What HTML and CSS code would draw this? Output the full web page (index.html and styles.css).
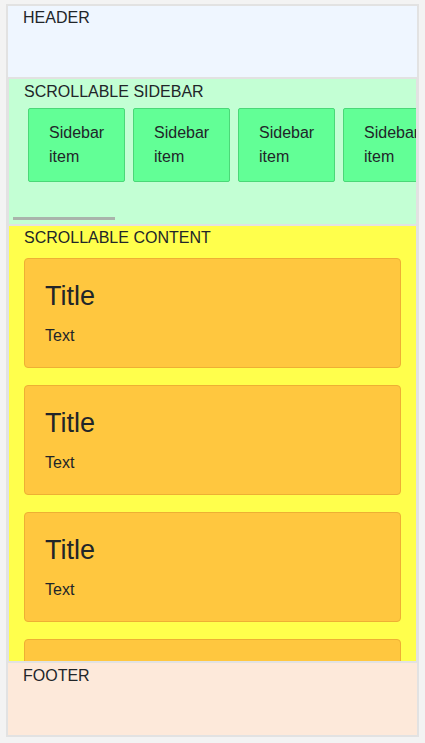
FILE: index.html
```html
<!DOCTYPE html>
<html lang="en">
<head>
<meta charset="utf-8">
<title>Layout</title>
<link rel="stylesheet" href="styles.css">
</head>
<body>
<div class="app">
  <header class="header">HEADER</header>
  <aside class="sidebar">
    <div class="section-title">SCROLLABLE SIDEBAR</div>
    <div class="sidebar-row">
      <div class="sidebar-item">Sidebar item</div>
      <div class="sidebar-item">Sidebar item</div>
      <div class="sidebar-item">Sidebar item</div>
      <div class="sidebar-item">Sidebar item</div>
      <div class="sidebar-item">Sidebar item</div>
      <div class="sidebar-item">Sidebar item</div>
      <div class="sidebar-item">Sidebar item</div>
      <div class="sidebar-item">Sidebar item</div>
      <div class="sidebar-item">Sidebar item</div>
      <div class="sidebar-item">Sidebar item</div>
      <div class="sidebar-item">Sidebar item</div>
      <div class="sidebar-item">Sidebar item</div>
      <div class="sidebar-item">Sidebar item</div>
      <div class="sidebar-item">Sidebar item</div>
    </div>
    <div class="scroll-thumb"></div>
  </aside>
  <main class="content">
    <div class="section-title">SCROLLABLE CONTENT</div>
    <div class="cards">
      <div class="card"><h4 class="card-title">Title</h4><p class="card-text">Text</p></div>
      <div class="card"><h4 class="card-title">Title</h4><p class="card-text">Text</p></div>
      <div class="card"><h4 class="card-title">Title</h4><p class="card-text">Text</p></div>
      <div class="card"><h4 class="card-title">Title</h4><p class="card-text">Text</p></div>
      <div class="card"><h4 class="card-title">Title</h4><p class="card-text">Text</p></div>
    </div>
  </main>
  <footer class="footer">FOOTER</footer>
</div>
</body>
</html>
```
FILE: styles.css
```css
html, body {
  margin: 0;
  padding: 0;
  height: 100%;
}

body {
  background: #f3f3f3;
  font-family: "Liberation Sans", Arial, sans-serif;
  font-size: 16px;
  line-height: 24px;
  color: #212529;
  padding: 4px 6px 6px;
  box-sizing: border-box;
}

.app {
  height: 733px;
  box-sizing: border-box;
  border: 2px solid #e2e2e2;
  background: #e2e2e2;
  display: flex;
  flex-direction: column;
  gap: 2px;
}

.header {
  height: 71px;
  flex-shrink: 0;
  background: #eff6ff;
  padding: 0 15px;
}

.footer {
  height: 72px;
  flex-shrink: 0;
  box-sizing: border-box;
  background: #fde9da;
  padding: 1px 15px 0;
}

.sidebar {
  position: relative;
  height: 145px;
  flex-shrink: 0;
  margin: 0 1px;
  background: #c3ffd4;
  padding: 1px 15px 0;
  overflow-x: auto;
  overflow-y: hidden;
  scrollbar-width: none;
  box-sizing: border-box;
}

.scroll-thumb {
  position: absolute;
  left: 4px;
  bottom: 4px;
  width: 102px;
  height: 3px;
  background: #a9b4ab;
}

.section-title {
  white-space: nowrap;
}

.sidebar-row {
  display: flex;
  flex-wrap: nowrap;
}

.sidebar-item {
  flex: 0 0 auto;
  width: 55px;
  margin: 4px;
  padding: 12px 20px;
  background: #62ff96;
  border: 1px solid #4bd878;
  border-radius: 2px;
}

.content {
  flex: 1 1 auto;
  min-height: 0;
  margin: 0 1px;
  background: #ffff4c;
  padding: 0 15px;
  overflow-y: auto;
  scrollbar-width: none;
}

.cards {
  margin-top: 8px;
  display: flex;
  flex-direction: column;
  gap: 17px;
}

.card {
  flex-shrink: 0;
  height: 110px;
  box-sizing: border-box;
  background: #ffc73f;
  border: 1px solid #eeaf34;
  border-radius: 4px;
  padding: 21px 20px 20px;
}

.card-title {
  margin: 0 0 12px;
  font-size: 27px;
  line-height: 32px;
  font-weight: 400;
}

.card-text {
  margin: 0;
}
```
